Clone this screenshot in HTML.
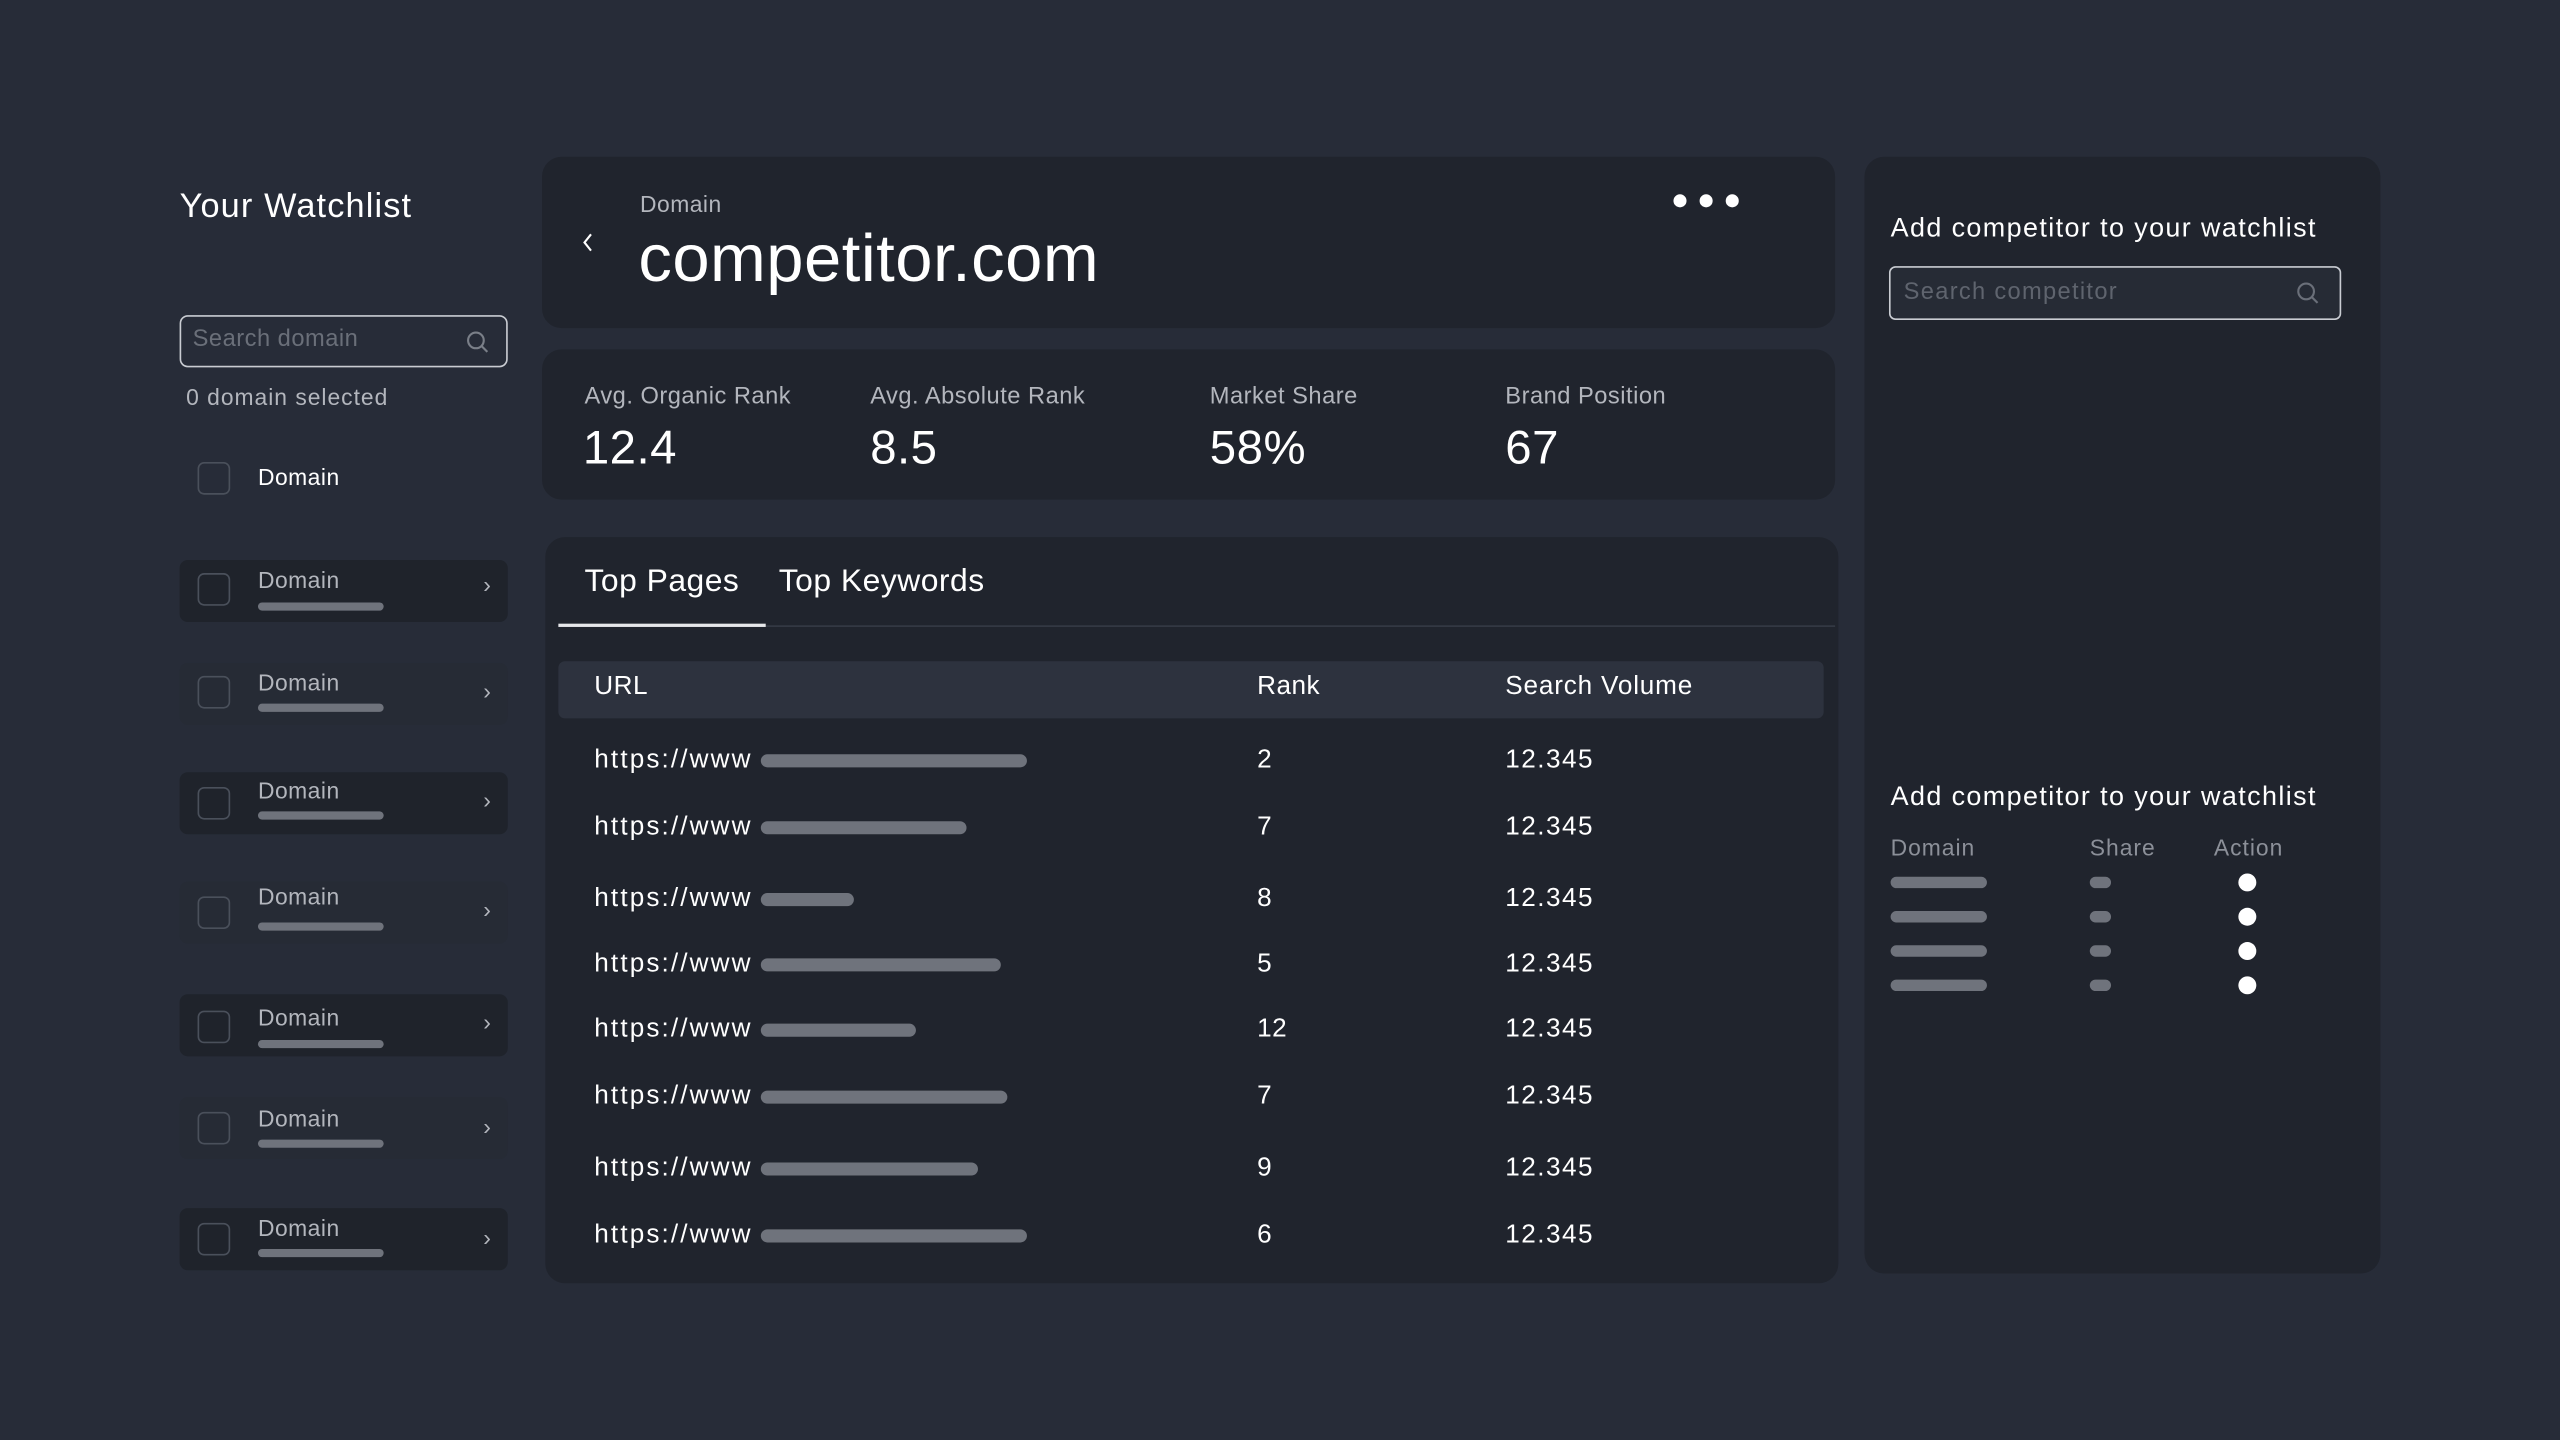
<!DOCTYPE html>
<html><head><meta charset="utf-8"><style>
*{margin:0;padding:0;box-sizing:border-box}
html,body{width:2560px;height:1440px;overflow:hidden;background:#272c38}
#w{position:absolute;left:0;top:0;width:1568px;height:882px;transform:scale(1.632653);transform-origin:0 0;font-family:"Liberation Sans",sans-serif;color:#fff;letter-spacing:0.3px}
.a{position:absolute}
.p{position:absolute;background:#20242d;border-radius:12px}
.g{color:#b3b6bd}
.bar{position:absolute;height:8px;border-radius:4px;background:#6f737c}
.row{position:absolute;left:110px;width:201px;height:38px;border-radius:5px}
.cb{position:absolute;width:20px;height:20px;border:1.5px solid #4a505b;border-radius:4px}
.sb{position:absolute;left:158px;width:77px;height:5px;border-radius:3px;background:#6f737c}
.t{white-space:nowrap}
.u{letter-spacing:1.3px}
.r{letter-spacing:0.9px}
</style></head><body><div id="w">
<div class="a t" style="left:110px;top:115px;font-size:21px;letter-spacing:0.7px">Your Watchlist</div>
<div class="a" style="left:110px;top:193px;width:201px;height:32px;border:1px solid #c9ccd2;border-radius:5px"></div>
<div class="a t" style="left:118px;top:200px;font-size:14.5px;color:#6a6f79">Search domain</div>
<svg class="a" style="left:285px;top:202px" width="15" height="15" viewBox="0 0 15 15"><circle cx="6.5" cy="6.5" r="4.8" fill="none" stroke="#7a7f88" stroke-width="1.3"/><path d="M10 10l3.5 3.5" stroke="#7a7f88" stroke-width="1.3"/></svg>
<div class="a t g" style="left:114px;top:235px;font-size:14px;letter-spacing:0.6px">0 domain selected</div>
<div class="cb" style="left:121px;top:283px"></div>
<div class="a t" style="left:158px;top:284px;font-size:14px">Domain</div>

<div class="row" style="top:343px;background:#1f232b"></div>
<div class="row" style="top:406px;background:#262b35"></div>
<div class="row" style="top:473px;background:#1f232b"></div>
<div class="row" style="top:540px;background:#262b35"></div>
<div class="row" style="top:609px;background:#1f232b"></div>
<div class="row" style="top:672px;background:#262b35"></div>
<div class="row" style="top:740px;background:#1f232b"></div>

<div class="cb" style="left:121px;top:351px"></div><div class="a t g" style="left:158px;top:347px;font-size:14px">Domain</div><div class="sb" style="top:369px"></div><div class="a g" style="left:296px;top:350px;font-size:14px">›</div>
<div class="cb" style="left:121px;top:414px"></div><div class="a t g" style="left:158px;top:410px;font-size:14px">Domain</div><div class="sb" style="top:431px"></div><div class="a g" style="left:296px;top:415px;font-size:14px">›</div>
<div class="cb" style="left:121px;top:482px"></div><div class="a t g" style="left:158px;top:476px;font-size:14px">Domain</div><div class="sb" style="top:497px"></div><div class="a g" style="left:296px;top:482px;font-size:14px">›</div>
<div class="cb" style="left:121px;top:549px"></div><div class="a t g" style="left:158px;top:541px;font-size:14px">Domain</div><div class="sb" style="top:565px"></div><div class="a g" style="left:296px;top:549px;font-size:14px">›</div>
<div class="cb" style="left:121px;top:619px"></div><div class="a t g" style="left:158px;top:615px;font-size:14px">Domain</div><div class="sb" style="top:637px"></div><div class="a g" style="left:296px;top:618px;font-size:14px">›</div>
<div class="cb" style="left:121px;top:681px"></div><div class="a t g" style="left:158px;top:677px;font-size:14px">Domain</div><div class="sb" style="top:698px"></div><div class="a g" style="left:296px;top:682px;font-size:14px">›</div>
<div class="cb" style="left:121px;top:749px"></div><div class="a t g" style="left:158px;top:744px;font-size:14px">Domain</div><div class="sb" style="top:765px"></div><div class="a g" style="left:296px;top:750px;font-size:14px">›</div>

<div class="p" style="left:332px;top:96px;width:792px;height:105px"></div>
<svg class="a" style="left:355px;top:142px" width="10" height="13" viewBox="0 0 10 13"><path d="M7 1.5L3 6.5l4 5" fill="none" stroke="#fff" stroke-width="1.3"/></svg>
<div class="a t g" style="left:392px;top:117px;font-size:14px">Domain</div>
<div class="a t" style="left:391px;top:135px;font-size:41px;letter-spacing:0.3px">competitor.com</div>
<div class="a" style="left:1025px;top:119px;width:8px;height:8px;border-radius:50%;background:#fff"></div>
<div class="a" style="left:1041px;top:119px;width:8px;height:8px;border-radius:50%;background:#fff"></div>
<div class="a" style="left:1057px;top:119px;width:8px;height:8px;border-radius:50%;background:#fff"></div>

<div class="p" style="left:332px;top:214px;width:792px;height:92px"></div>
<div class="a t g" style="left:358px;top:235px;font-size:14.5px">Avg. Organic Rank</div>
<div class="a t g" style="left:533px;top:235px;font-size:14.5px">Avg. Absolute Rank</div>
<div class="a t g" style="left:741px;top:235px;font-size:14.5px">Market Share</div>
<div class="a t g" style="left:922px;top:235px;font-size:14.5px">Brand Position</div>
<div class="a t" style="left:357px;top:259px;font-size:29px">12.4</div>
<div class="a t" style="left:533px;top:259px;font-size:29px">8.5</div>
<div class="a t" style="left:741px;top:259px;font-size:29px">58%</div>
<div class="a t" style="left:922px;top:259px;font-size:29px">67</div>

<div class="p" style="left:334px;top:329px;width:792px;height:457px"></div>
<div class="a t" style="left:358px;top:345px;font-size:19.5px">Top Pages</div>
<div class="a t" style="left:477px;top:345px;font-size:19.5px">Top Keywords</div>
<div class="a" style="left:342px;top:383px;width:782px;height:1px;background:#353a45"></div>
<div class="a" style="left:342px;top:382px;width:127px;height:2px;background:#e6e7ea"></div>
<div class="a" style="left:342px;top:405px;width:775px;height:35px;background:#2d323e;border-radius:4px"></div>
<div class="a t" style="left:364px;top:412px;font-size:16px">URL</div>
<div class="a t" style="left:770px;top:412px;font-size:16px">Rank</div>
<div class="a t" style="left:922px;top:412px;font-size:16px;letter-spacing:0.5px">Search Volume</div>

<div class="a t u" style="left:364px;top:457px;font-size:16px">https://www</div><div class="bar" style="left:466px;top:462px;width:163px"></div><div class="a t" style="left:770px;top:457px;font-size:16px">2</div><div class="a t r" style="left:922px;top:457px;font-size:16px">12.345</div>
<div class="a t u" style="left:364px;top:498px;font-size:16px">https://www</div><div class="bar" style="left:466px;top:503px;width:126px"></div><div class="a t" style="left:770px;top:498px;font-size:16px">7</div><div class="a t r" style="left:922px;top:498px;font-size:16px">12.345</div>
<div class="a t u" style="left:364px;top:542px;font-size:16px">https://www</div><div class="bar" style="left:466px;top:547px;width:57px"></div><div class="a t" style="left:770px;top:542px;font-size:16px">8</div><div class="a t r" style="left:922px;top:542px;font-size:16px">12.345</div>
<div class="a t u" style="left:364px;top:582px;font-size:16px">https://www</div><div class="bar" style="left:466px;top:587px;width:147px"></div><div class="a t" style="left:770px;top:582px;font-size:16px">5</div><div class="a t r" style="left:922px;top:582px;font-size:16px">12.345</div>
<div class="a t u" style="left:364px;top:622px;font-size:16px">https://www</div><div class="bar" style="left:466px;top:627px;width:95px"></div><div class="a t" style="left:770px;top:622px;font-size:16px">12</div><div class="a t r" style="left:922px;top:622px;font-size:16px">12.345</div>
<div class="a t u" style="left:364px;top:663px;font-size:16px">https://www</div><div class="bar" style="left:466px;top:668px;width:151px"></div><div class="a t" style="left:770px;top:663px;font-size:16px">7</div><div class="a t r" style="left:922px;top:663px;font-size:16px">12.345</div>
<div class="a t u" style="left:364px;top:707px;font-size:16px">https://www</div><div class="bar" style="left:466px;top:712px;width:133px"></div><div class="a t" style="left:770px;top:707px;font-size:16px">9</div><div class="a t r" style="left:922px;top:707px;font-size:16px">12.345</div>
<div class="a t u" style="left:364px;top:748px;font-size:16px">https://www</div><div class="bar" style="left:466px;top:753px;width:163px"></div><div class="a t" style="left:770px;top:748px;font-size:16px">6</div><div class="a t r" style="left:922px;top:748px;font-size:16px">12.345</div>

<div class="p" style="left:1142px;top:96px;width:316px;height:684px"></div>
<div class="a t" style="left:1158px;top:131px;font-size:16.5px;letter-spacing:0.85px">Add competitor to your watchlist</div>
<div class="a" style="left:1157px;top:163px;width:277px;height:33px;border:1px solid #c9ccd2;border-radius:4px;background:#262b35"></div>
<div class="a t" style="left:1166px;top:171px;font-size:14.5px;color:#5f646e;letter-spacing:0.8px">Search competitor</div>
<svg class="a" style="left:1406px;top:172px" width="15" height="15" viewBox="0 0 15 15"><circle cx="6.5" cy="6.5" r="4.8" fill="none" stroke="#6a6f79" stroke-width="1.3"/><path d="M10 10l3.5 3.5" stroke="#6a6f79" stroke-width="1.3"/></svg>
<div class="a t" style="left:1158px;top:479px;font-size:16.5px;letter-spacing:0.85px">Add competitor to your watchlist</div>
<div class="a t" style="left:1158px;top:511px;font-size:14px;color:#8c9099;letter-spacing:0.6px">Domain</div>
<div class="a t" style="left:1280px;top:511px;font-size:14px;color:#8c9099;letter-spacing:0.6px">Share</div>
<div class="a t" style="left:1356px;top:511px;font-size:14px;color:#8c9099;letter-spacing:0.6px">Action</div>
<div class="bar" style="left:1158px;top:537px;width:59px;height:7px"></div><div class="bar" style="left:1280px;top:537px;width:13px;height:7px"></div><div class="a" style="left:1371px;top:535px;width:11px;height:11px;border-radius:50%;background:#fff"></div>
<div class="bar" style="left:1158px;top:558px;width:59px;height:7px"></div><div class="bar" style="left:1280px;top:558px;width:13px;height:7px"></div><div class="a" style="left:1371px;top:556px;width:11px;height:11px;border-radius:50%;background:#fff"></div>
<div class="bar" style="left:1158px;top:579px;width:59px;height:7px"></div><div class="bar" style="left:1280px;top:579px;width:13px;height:7px"></div><div class="a" style="left:1371px;top:577px;width:11px;height:11px;border-radius:50%;background:#fff"></div>
<div class="bar" style="left:1158px;top:600px;width:59px;height:7px"></div><div class="bar" style="left:1280px;top:600px;width:13px;height:7px"></div><div class="a" style="left:1371px;top:598px;width:11px;height:11px;border-radius:50%;background:#fff"></div>
</div></body></html>
